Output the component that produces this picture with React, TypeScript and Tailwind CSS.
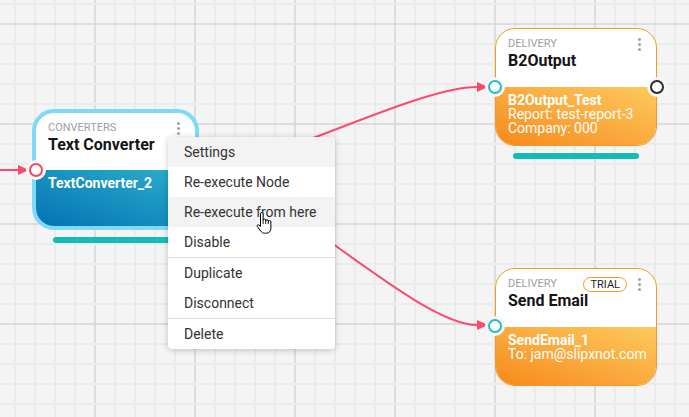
import React from "react";

type Port = { x: number; y: number; color: string };

function Kebab() {
  return (
    <div className="flex flex-col items-center gap-[2px]">
      <span className="block w-[3px] h-[3px] rounded-full bg-[#a3a3a3]" />
      <span className="block w-[3px] h-[3px] rounded-full bg-[#a3a3a3]" />
      <span className="block w-[3px] h-[3px] rounded-full bg-[#a3a3a3]" />
    </div>
  );
}

function PortDot({ x, y, color }: Port) {
  return (
    <div
      className="absolute w-[20px] h-[20px] rounded-full bg-[#f7f7f7] flex items-center justify-center"
      style={{ left: x - 10, top: y - 10 }}
    >
      <div className="w-[14px] h-[14px] rounded-full bg-white border-2" style={{ borderColor: color }} />
    </div>
  );
}

type NodeProps = {
  left: number;
  top: number;
  width: number;
  height: number;
  headerH: number;
  boxClass: string;
  gradClass: string;
  label: string;
  title: string;
  badge?: string;
  bold: string;
  lines: string[];
  ports: Port[];
  barMx?: number;
};

function FlowNode(p: NodeProps) {
  return (
    <div className="absolute" style={{ left: p.left, top: p.top, width: p.width }}>
      <div className={"flex flex-col overflow-hidden bg-white " + p.boxClass} style={{ height: p.height }}>
        <div className="flex flex-col pl-3 pr-[15px] pt-[9px]" style={{ height: p.headerH }}>
          <div className="flex items-center h-[12px]">
            <span className="flex-1 text-[11px] leading-[12px] text-[#9e9e9e] uppercase tracking-normal">{p.label}</span>
            {p.badge && (
              <span className="mr-[11px] h-[15px] px-[6px] rounded-full border border-[#f39a24] text-[11px] leading-[13px] text-[#222] flex items-center">
                {p.badge}
              </span>
            )}
            <Kebab />
          </div>
          <div className="mt-[2px] text-[16px] leading-[18px] font-bold text-[#151515]">{p.title}</div>
        </div>
        <div className={"flex-1 pl-3 pt-[6px] text-white text-[14px] leading-[14px] " + p.gradClass}>
          <div className="font-bold">{p.bold}</div>
          {p.lines.map((l) => (
            <div key={l}>{l}</div>
          ))}
        </div>
      </div>
      {p.barMx !== undefined && (
        <div className="mt-[7px] h-[6px] rounded-full bg-[#12bdb5]" style={{ marginLeft: p.barMx, marginRight: p.barMx }} />
      )}
      {p.ports.map((pt, i) => (
        <PortDot key={i} {...pt} />
      ))}
    </div>
  );
}

function Grid() {
  const vx: number[] = [];
  for (let x = 15; x < 689; x += 20) vx.push(x);
  const hy: number[] = [];
  for (let y = 4; y < 417; y += 20) hy.push(y);
  return (
    <svg className="absolute inset-0" width={689} height={417}>
      {vx.map((x) => (
        <line key={"v" + x} x1={x} y1={0} x2={x} y2={417} stroke={(x - 95) % 100 === 0 ? "#d6d6d6" : "#ebebeb"} strokeWidth={(x - 95) % 100 === 0 ? 1.5 : 2} />
      ))}
      {hy.map((y) => (
        <line key={"h" + y} x1={0} y1={y} x2={689} y2={y} stroke={(y - 24) % 100 === 0 ? "#d6d6d6" : "#ebebeb"} strokeWidth={(y - 24) % 100 === 0 ? 1.5 : 2} />
      ))}
    </svg>
  );
}

function Edges() {
  const c = "#fb4a6d";
  return (
    <svg className="absolute inset-0" width={689} height={417}>
      <path d="M0 170 H19" stroke={c} strokeWidth={2} fill="none" />
      <polygon points="29,170 18,165 18,175" fill={c} />
      <path d="M199 170 C262 170 414 87 477 87" stroke={c} strokeWidth={2} fill="none" />
      <polygon points="488,87 477,82 477,92" fill={c} />
      <path d="M199 170 C262 170 414 325 477 325" stroke={c} strokeWidth={2} fill="none" />
      <polygon points="488,325 477,320 477,330" fill={c} />
    </svg>
  );
}

function Menu() {
  const item = "h-[30px] px-4 flex items-center text-[14px] text-[#333]";
  return (
    <div className="absolute left-[168px] top-[137px] w-[167px] bg-white rounded-[4px] shadow-[0_1px_6px_rgba(0,0,0,0.22)] overflow-hidden">
      <div className={item + " bg-[#f3f3f3]"}>Settings</div>
      <div className={item}>Re-execute Node</div>
      <div className={item + " bg-[#f3f3f3]"}>Re-execute from here</div>
      <div className={item}>Disable</div>
      <div className="h-px bg-[#dedede]" />
      <div className={item}>Duplicate</div>
      <div className={item}>Disconnect</div>
      <div className="h-px bg-[#dedede]" />
      <div className={item}>Delete</div>
    </div>
  );
}

function HandCursor() {
  return (
    <svg className="absolute left-[255px] top-[211px]" width={18} height={25} viewBox="0 0 18 24">
      <path
        d="M5.5 2.3 a1.3 1.3 0 0 1 2.6 0 V8.8 a1.3 1.3 0 0 1 2.6 0 V9.6 a1.3 1.3 0 0 1 2.6 0 V10.4 a1.3 1.3 0 0 1 2.6 0 V17 c0 2.8 -1.8 4.7 -4.5 4.7 H9.5 c-1.8 0 -2.8 -0.8 -3.8 -2.2 L2.3 15 c-0.7 -1 0.6 -2.3 1.6 -1.5 L5.5 15 Z"
        fill="#fff"
        stroke="#000"
        strokeWidth={1}
        strokeLinejoin="round"
      />
      <path d="M8.1 8.8 V12.5 M10.7 9.6 V12.5 M13.3 10.4 V12.5" stroke="#000" strokeWidth={0.9} />
    </svg>
  );
}

export default function App() {
  return (
    <div className="relative w-[689px] h-[417px] overflow-hidden bg-[#f4f4f4] font-['Roboto',sans-serif]">
      <Grid />
      <Edges />
      <FlowNode
        left={32}
        top={109}
        width={167}
        height={121}
        headerH={57}
        boxClass="border-4 border-[#7fd9f8] rounded-[22px]"
        gradClass="bg-linear-to-tr from-[#0572b4] to-[#2cb0cb]"
        label="Converters"
        title="Text Converter"
        bold="TextConverter_2"
        lines={[]}
        ports={[{ x: 4, y: 61, color: "#f0476a" }]}
        barMx={21}
      />
      <FlowNode
        left={495}
        top={28}
        width={162}
        height={118}
        headerH={58}
        boxClass="border border-[#f39a24] rounded-[20px]"
        gradClass="bg-linear-to-tr from-[#f68a15] to-[#fdc95b]"
        label="Delivery"
        title="B2Output"
        bold="B2Output_Test"
        lines={["Report: test-report-3", "Company: 000"]}
        ports={[
          { x: 0, y: 59, color: "#1fc0bf" },
          { x: 162, y: 59, color: "#2a2a2a" },
        ]}
        barMx={18}
      />
      <FlowNode
        left={495}
        top={268}
        width={162}
        height={118}
        headerH={58}
        boxClass="border border-[#f39a24] rounded-[20px]"
        gradClass="bg-linear-to-tr from-[#f68a15] to-[#fdc95b]"
        label="Delivery"
        title="Send Email"
        badge="TRIAL"
        bold="SendEmail_1"
        lines={["To: jam@slipxnot.com"]}
        ports={[{ x: 0, y: 58, color: "#1fc0bf" }]}
      />
      <Menu />
      <HandCursor />
    </div>
  );
}
